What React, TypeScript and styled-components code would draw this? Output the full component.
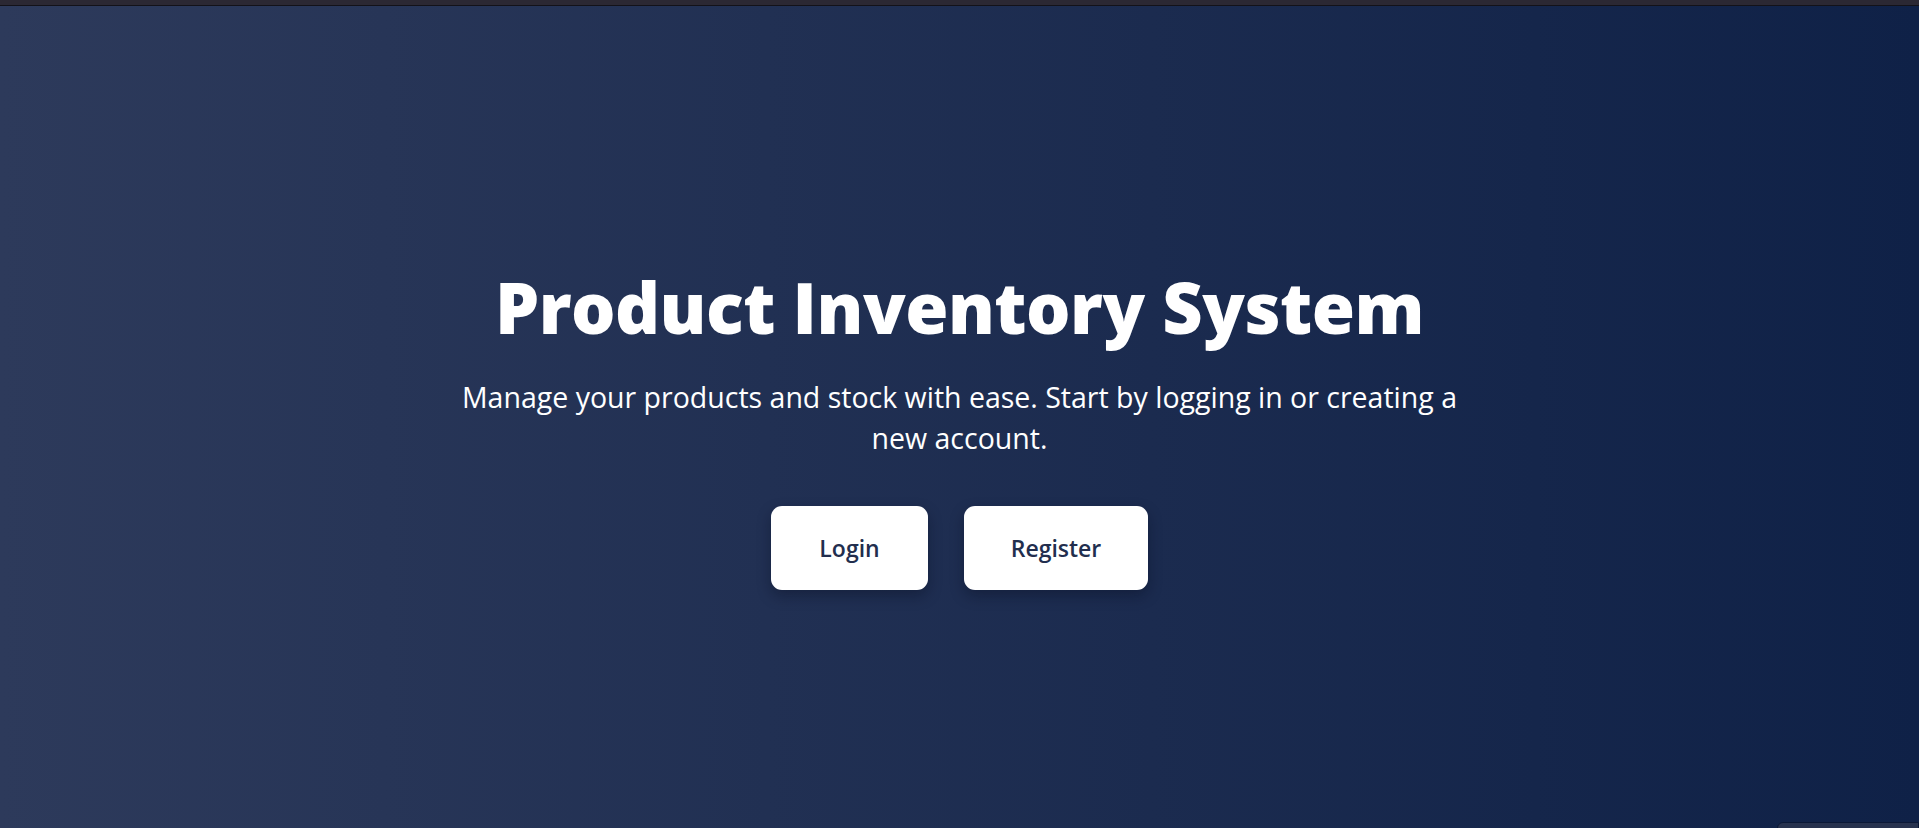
import styled, { createGlobalStyle } from "styled-components"

const GlobalStyle = createGlobalStyle`
  * { box-sizing: border-box; }
  html, body { margin: 0; padding: 0; }
  body {
    font-family: "Open Sans", "Noto Sans", "Liberation Sans", sans-serif;
    background: #0f2147;
    overflow: hidden;
  }
`

const Page = styled.div`
  height: 828px;
  display: flex;
  flex-direction: column;
`

const ChromeStrip = styled.div`
  height: 6px;
  background: #2b2833;
  border-bottom: 1px solid #131219;
  flex-shrink: 0;
`

const Hero = styled.main`
  position: relative;
  flex: 1;
  display: flex;
  flex-direction: column;
  align-items: center;
  justify-content: center;
  background: linear-gradient(to right, #2d3a5b, #0f2147);
  color: #ffffff;
  text-align: center;
  padding: 25px 0 4px;
`

const Title = styled.h1`
  margin: 0;
  font-size: 70px;
  font-weight: 800;
  line-height: 1.2;
  letter-spacing: -0.5px;
`

const Subtitle = styled.p`
  margin: 28px 0 0;
  max-width: 1010px;
  font-size: 28.5px;
  line-height: 41px;
  font-weight: 400;
`

const Actions = styled.div`
  display: flex;
  gap: 36px;
  margin-top: 47px;
`

const Button = styled.button<{ $width: number }>`
  width: ${(p) => p.$width}px;
  height: 84px;
  border: none;
  border-radius: 11px;
  background: #ffffff;
  color: #222e4e;
  font-family: inherit;
  font-size: 23px;
  font-weight: 600;
  cursor: pointer;
  box-shadow: 0 6px 14px rgba(5, 12, 30, 0.35);
`

const CornerTab = styled.div`
  position: absolute;
  right: 0;
  bottom: -10px;
  width: 142px;
  height: 16px;
  border-radius: 6px 0 0 0;
  background: #27324e;
  border: 1px solid #0b1836;
`

export default function App() {
  return (
    <>
      <GlobalStyle />
      <Page>
        <ChromeStrip />
        <Hero>
          <Title>Product Inventory System</Title>
          <Subtitle>
            Manage your products and stock with ease. Start by logging in or creating a new account.
          </Subtitle>
          <Actions>
            <Button $width={157}>Login</Button>
            <Button $width={184}>Register</Button>
          </Actions>
          <CornerTab />
        </Hero>
      </Page>
    </>
  )
}
